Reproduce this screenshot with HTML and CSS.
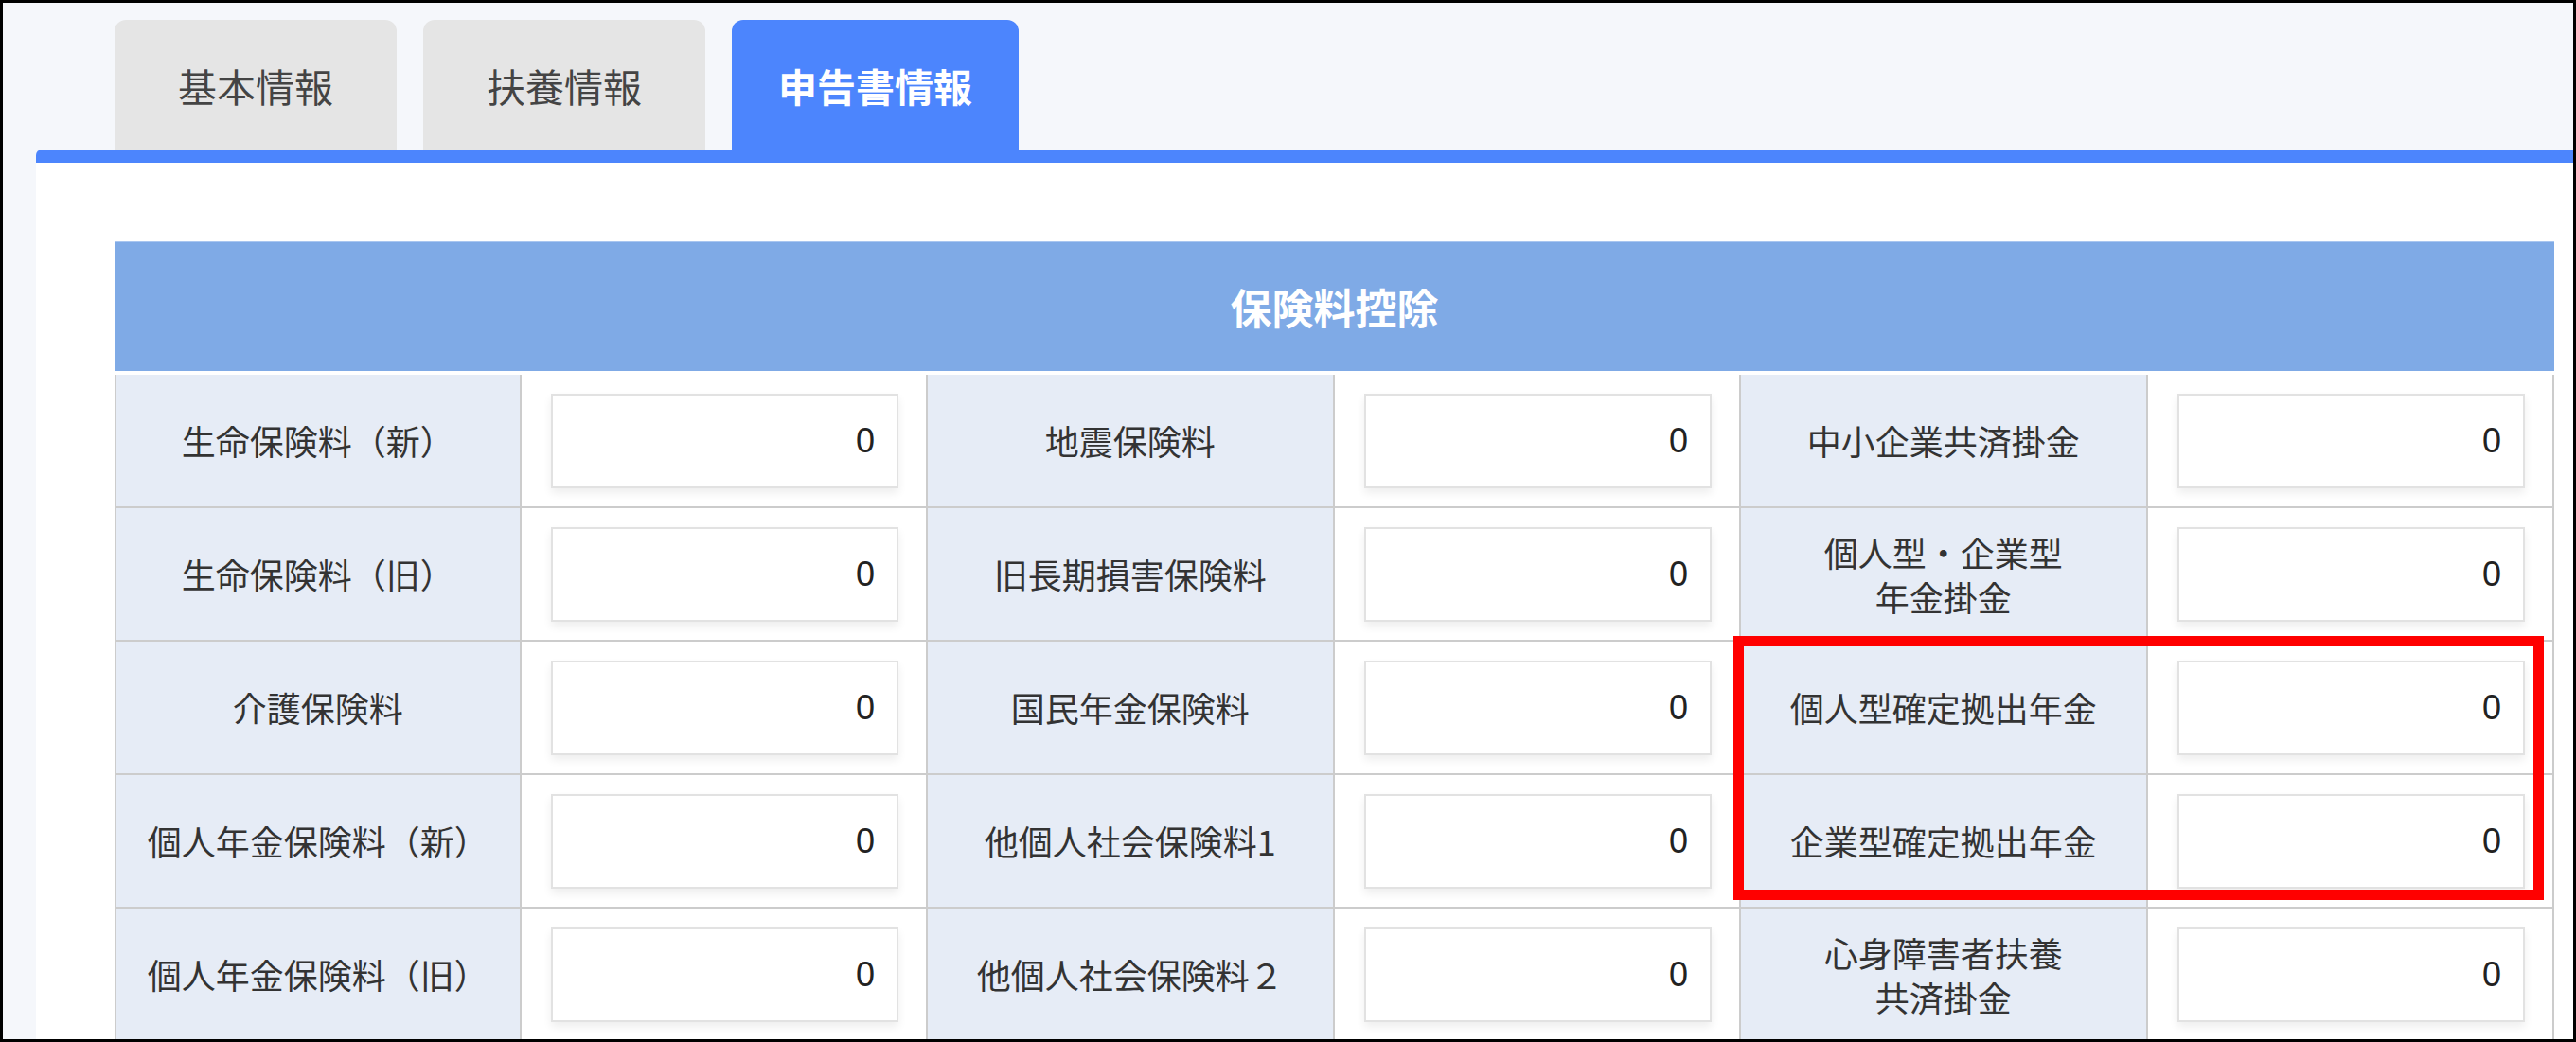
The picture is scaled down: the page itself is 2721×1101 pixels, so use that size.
FILE: index.html
```html
<!DOCTYPE html>
<html lang="ja">
<head>
<meta charset="utf-8">
<title>申告書情報</title>
<link rel="stylesheet" href="styles.css">
</head>
<body>
<div class="frame">
  <div class="tabs">
    <div class="tab">基本情報</div>
    <div class="tab">扶養情報</div>
    <div class="tab tab-active">申告書情報</div>
  </div>
  <div class="panel">
    <div class="grid">
      <div class="grid-head">保険料控除</div>

      <div class="label first">生命保険料（新）</div>
      <div class="field"><input class="num" type="text" value="0"></div>
      <div class="label">地震保険料</div>
      <div class="field"><input class="num" type="text" value="0"></div>
      <div class="label">中小企業共済掛金</div>
      <div class="field"><input class="num" type="text" value="0"></div>

      <div class="label first">生命保険料（旧）</div>
      <div class="field"><input class="num" type="text" value="0"></div>
      <div class="label">旧長期損害保険料</div>
      <div class="field"><input class="num" type="text" value="0"></div>
      <div class="label">個人型・企業型<br>年金掛金</div>
      <div class="field"><input class="num" type="text" value="0"></div>

      <div class="label first">介護保険料</div>
      <div class="field"><input class="num" type="text" value="0"></div>
      <div class="label">国民年金保険料</div>
      <div class="field"><input class="num" type="text" value="0"></div>
      <div class="label">個人型確定拠出年金</div>
      <div class="field"><input class="num" type="text" value="0"></div>

      <div class="label first">個人年金保険料（新）</div>
      <div class="field"><input class="num" type="text" value="0"></div>
      <div class="label">他個人社会保険料1</div>
      <div class="field"><input class="num" type="text" value="0"></div>
      <div class="label">企業型確定拠出年金</div>
      <div class="field"><input class="num" type="text" value="0"></div>

      <div class="label first">個人年金保険料（旧）</div>
      <div class="field"><input class="num" type="text" value="0"></div>
      <div class="label">他個人社会保険料２</div>
      <div class="field"><input class="num" type="text" value="0"></div>
      <div class="label">心身障害者扶養<br>共済掛金</div>
      <div class="field"><input class="num" type="text" value="0"></div>
    </div>
  </div>
  <div class="highlight"></div>
</div>
</body>
</html>
```

FILE: styles.css
```css
html, body {
  margin: 0;
  padding: 0;
  background: #ffffff;
}

body {
  font-family: "Noto Sans CJK JP", "Noto Sans", sans-serif;
}

.frame {
  position: relative;
  width: 2721px;
  height: 1101px;
  box-sizing: border-box;
  border: 3px solid #000;
  background: #f5f7fb;
  overflow: hidden;
}

.tabs {
  display: flex;
  gap: 28px;
  padding: 18px 0 0 118px;
}

.tab {
  width: 298px;
  height: 137px;
  box-sizing: border-box;
  background: #e5e5e5;
  border-radius: 12px 12px 0 0;
  display: flex;
  align-items: center;
  justify-content: center;
  font-size: 41px;
  color: #444;
  letter-spacing: 0;
}

.tab-active {
  width: 303px;
  background: #4c85fd;
  color: #ffffff;
  font-weight: 700;
}

.panel {
  margin-left: 35px;
  width: 2760px;
  height: 1100px;
  background: #ffffff;
  border-top: 14px solid #4c85fd;
  border-top-left-radius: 6px;
  padding: 83px 0 0 83px;
  box-sizing: border-box;
}

.grid {
  width: 2577px;
  display: grid;
  grid-template-columns: repeat(6, 1fr);
  grid-auto-rows: 141px;
}

.grid-head {
  grid-column: 1 / -1;
  height: 137px;
  background: #7faae6;
  color: #ffffff;
  font-weight: 700;
  font-size: 44px;
  display: flex;
  align-items: center;
  justify-content: center;
  border-top: 1px solid #a9c6f0;
  box-sizing: border-box;
}

.label,
.field {
  box-sizing: border-box;
  border-right: 2px solid #cccccc;
  border-bottom: 2px solid #cccccc;
}

.first {
  border-left: 2px solid #cccccc;
}

.label {
  background: #e6ecf6;
  display: flex;
  align-items: center;
  justify-content: center;
  text-align: center;
  font-size: 36px;
  line-height: 47px;
  color: #333333;
}

.field {
  background: #ffffff;
  padding: 20px 29px 19px 31px;
}

.num {
  display: block;
  width: 100%;
  height: 100px;
  box-sizing: border-box;
  border: 2px solid #e2e2e2;
  background: #ffffff;
  box-shadow: 0 5px 9px rgba(0, 0, 0, 0.07);
  text-align: right;
  padding: 0 23px 0 10px;
  font-family: "Liberation Sans", Arial, sans-serif;
  font-size: 36px;
  color: #222222;
  outline: none;
  margin: 0;
}

.highlight {
  position: absolute;
  left: 1828px;
  top: 669px;
  width: 856px;
  height: 279px;
  box-sizing: border-box;
  border: 11px solid #ff0000;
  pointer-events: none;
}
```
